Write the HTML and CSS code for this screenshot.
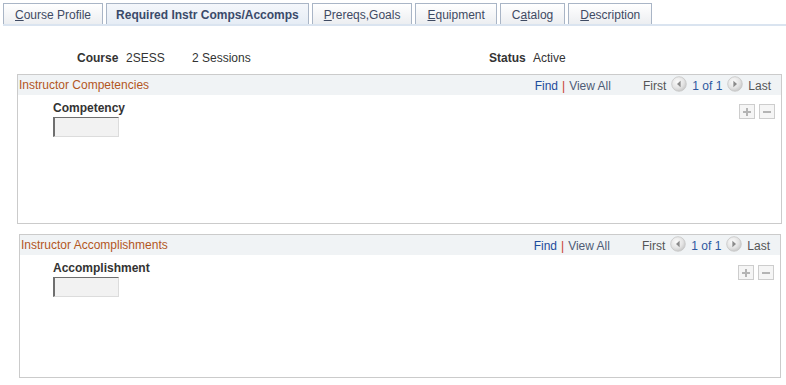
FILE: index.html
```html
<!DOCTYPE html>
<html lang="en">
<head>
<meta charset="utf-8">
<title>Required Instr Comps/Accomps</title>
<link rel="stylesheet" href="styles.css">
</head>
<body>
<div class="tabs">
  <a class="tab"><u>C</u>ourse Profile</a>
  <a class="tab active">Required Instr Comps/Accomps</a>
  <a class="tab"><u>P</u>rereqs,Goals</a>
  <a class="tab"><u>E</u>quipment</a>
  <a class="tab">C<u>a</u>talog</a>
  <a class="tab"><u>D</u>escription</a>
</div>

<div class="info">
  <span class="lbl">Course</span>
  <span class="val">2SESS</span>
  <span class="val">2 Sessions</span>
  <span class="lbl">Status</span>
  <span class="val">Active</span>
</div>

<section class="grid g1">
  <div class="ghead">
    <span class="gtitle">Instructor Competencies</span>
    <span class="nav">
      <a class="lnk">Find</a><span class="sep">|</span><a class="viewall">View All</a>
      <span class="first">First</span>
      <svg class="arr" width="16" height="16" viewBox="0 0 16 16"><defs><radialGradient id="ga" cx="0.4" cy="0.35" r="0.7"><stop offset="0" stop-color="#fbfbfb"/><stop offset="0.6" stop-color="#e4e4e4"/><stop offset="1" stop-color="#c4c4c4"/></radialGradient></defs><circle cx="8" cy="8" r="7.3" fill="url(#ga)" stroke="#c6c6c6" stroke-width="0.8"/><path d="M9.6 4.8 L6 8 L9.6 11.2 Z" fill="#8a8a8a"/></svg>
      <span class="cnt">1 of 1</span>
      <svg class="arr" width="16" height="16" viewBox="0 0 16 16"><circle cx="8" cy="8" r="7.3" fill="url(#ga)" stroke="#c6c6c6" stroke-width="0.8"/><path d="M6.4 4.8 L10 8 L6.4 11.2 Z" fill="#8a8a8a"/></svg>
      <span class="last">Last</span>
    </span>
  </div>
  <div class="gbody">
    <div class="field">
      <div class="flabel">Competency</div>
      <div class="input"></div>
    </div>
    <div class="btns">
      <span class="btn"><svg width="10" height="10" viewBox="0 0 10 10"><path d="M5 1v8M1 5h8" stroke="#b4b4b4" stroke-width="2"/></svg></span>
      <span class="btn"><svg width="10" height="10" viewBox="0 0 10 10"><path d="M1 5h8" stroke="#b4b4b4" stroke-width="2"/></svg></span>
    </div>
  </div>
</section>

<section class="grid g2">
  <div class="ghead">
    <span class="gtitle">Instructor Accomplishments</span>
    <span class="nav">
      <a class="lnk">Find</a><span class="sep">|</span><a class="viewall">View All</a>
      <span class="first">First</span>
      <svg class="arr" width="16" height="16" viewBox="0 0 16 16"><circle cx="8" cy="8" r="7.3" fill="url(#ga)" stroke="#c6c6c6" stroke-width="0.8"/><path d="M9.6 4.8 L6 8 L9.6 11.2 Z" fill="#8a8a8a"/></svg>
      <span class="cnt">1 of 1</span>
      <svg class="arr" width="16" height="16" viewBox="0 0 16 16"><circle cx="8" cy="8" r="7.3" fill="url(#ga)" stroke="#c6c6c6" stroke-width="0.8"/><path d="M6.4 4.8 L10 8 L6.4 11.2 Z" fill="#8a8a8a"/></svg>
      <span class="last">Last</span>
    </span>
  </div>
  <div class="gbody">
    <div class="field">
      <div class="flabel">Accomplishment</div>
      <div class="input"></div>
    </div>
    <div class="btns">
      <span class="btn"><svg width="10" height="10" viewBox="0 0 10 10"><path d="M5 1v8M1 5h8" stroke="#b4b4b4" stroke-width="2"/></svg></span>
      <span class="btn"><svg width="10" height="10" viewBox="0 0 10 10"><path d="M1 5h8" stroke="#b4b4b4" stroke-width="2"/></svg></span>
    </div>
  </div>
</section>
</body>
</html>
```

FILE: styles.css
```css
* { box-sizing: border-box; }
html, body { margin: 0; padding: 0; background: #fff; }
body {
  width: 786px;
  font-family: "Liberation Sans", Arial, sans-serif;
  font-size: 12px;
  color: #333;
}

.tabs {
  display: flex;
  gap: 3px;
  padding-top: 3px;
  margin-left: 3px;
  border-bottom: 2px solid #dae4f0;
}
.tab {
  display: block;
  height: 21px;
  line-height: 22px;
  padding: 0 11px;
  border: 1px solid #a9b5c6;
  border-bottom: none;
  background: linear-gradient(#ffffff, #eceef1);
  color: #3e4a63;
  white-space: nowrap;
}
.tab u { text-decoration: underline; }
.tab.active {
  font-weight: bold;
  padding: 0 9px;
  background: linear-gradient(#f4f7fb, #e6edf5);
  color: #3a4a6a;
}

.info {
  display: grid;
  grid-template-columns: 49px 66px 297px 44px auto;
  padding-left: 77px;
  margin-top: 25px;
  line-height: 14px;
}
.info .lbl { font-weight: bold; color: #333; }

.grid {
  border: 1px solid #cbcbcb;
}
.g1 { margin: 9px 0 0 17px; width: 765px; height: 150px; }
.g2 { margin: 10px 0 0 19px; width: 762px; height: 144px; }

.ghead {
  display: flex;
  align-items: center;
  height: 20px;
  background: #f0f3f5;
  padding: 0 10px 0 1px;
}
.gtitle {
  flex: 1;
  color: #b3561e;
}
.nav {
  display: flex;
  align-items: center;
  line-height: 14px;
  padding-top: 2px;
}
.lnk { color: #1d4b9c; }
.sep { color: #c93b2f; margin: 0 4px; }
.viewall { color: #4f5b75; }
.first { color: #555; margin-left: 32px; margin-right: 5px; }
.last { color: #555; margin-left: 5px; }
.cnt { color: #2e58a0; margin: 0 5px; }
.arr { display: block; margin-top: -5px; }

.gbody {
  display: flex;
  justify-content: space-between;
  padding: 6px 6px 0 35px;
}
.g2 .gbody { padding-left: 33px; }
.flabel {
  font-weight: bold;
  color: #333;
  line-height: 14px;
  height: 14px;
}
.input {
  margin-top: 2px;
  width: 66px;
  height: 20px;
  background: #f2f2f2;
  border: 1px solid #dcdcdc;
  border-top-color: #6f6f6f;
  border-left: 2px solid #6f6f6f;
}
.btns {
  display: flex;
  gap: 4px;
  margin-top: 3px;
}
.btn {
  display: flex;
  align-items: center;
  justify-content: center;
  width: 16px;
  height: 15px;
  border: 1px solid #cdcdcd;
  background: #f5f5f5;
}
.g2 .btns { margin-top: 4px; }
```
